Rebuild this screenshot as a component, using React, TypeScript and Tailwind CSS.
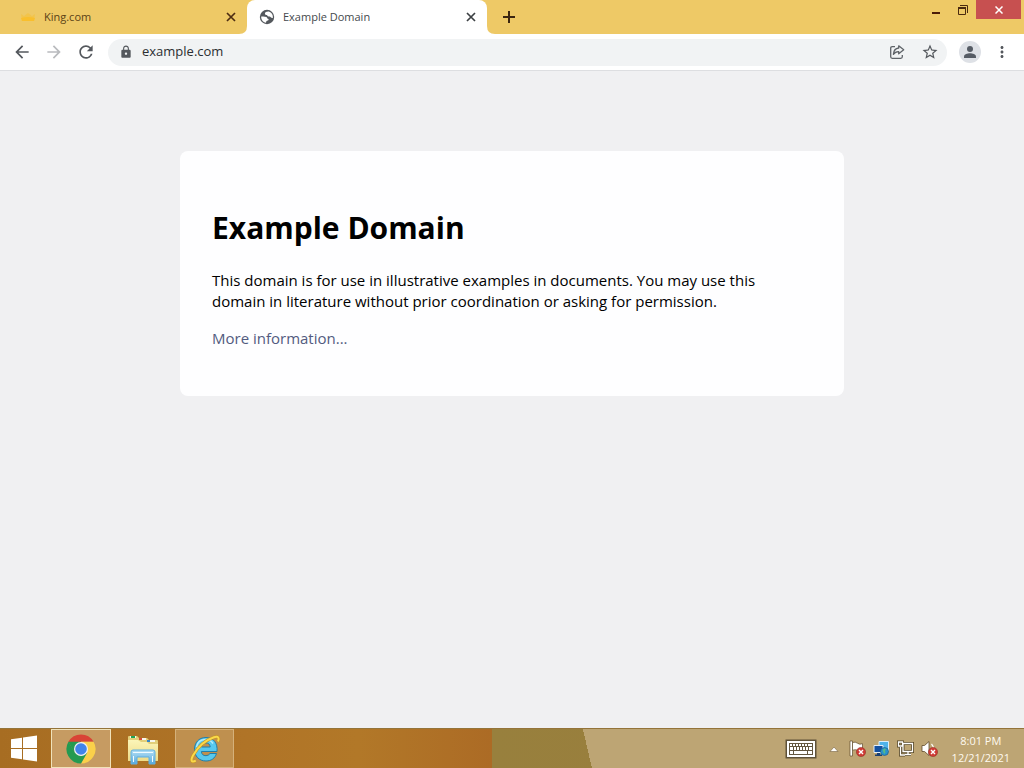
import type { ReactNode } from "react";
import {
  MdArrowBack,
  MdArrowForward,
  MdLock,
  MdMoreVert,
  MdRefresh,
  MdStarBorder,
} from "react-icons/md";

function GlobeIcon() {
  return (
    <svg viewBox="0 0 16 16" className="size-4 shrink-0" aria-hidden="true">
      <circle cx="8" cy="8" r="7.2" fill="#54585d" />
      <path
        d="M9.800 2.400C7.400 2.300 6 3.100 5.900 4.600c0 1.300 1 1.500 2.100 1.500.4 1.300 1.200 1.500 2.600 1.500 1 0 1.200 1.300 2.300 1.300h.9C14.300 6 12.700 3.200 9.800 2.400z"
        fill="#fff"
      />
      <path
        d="M2.200 7.600c1.800-.2 3.800-.2 5.200.5.9.5.7 1.400 1.400 1.700 1 .3 1.100 1 .5 1.500-.7.500-1.900.3-2 1.300l-.3 1.200C4.100 13.300 2 10.900 2.200 7.600z"
        fill="#fff"
      />
    </svg>
  );
}

function CrownIcon() {
  return (
    <svg viewBox="0 0 16 16" className="size-4 shrink-0" aria-hidden="true">
      <path d="M1 5l3 2 4-3 4 3 3-2-1 7H2z" fill="#f2c44c" />
      <path d="M1 9q7-2 14 0l-1 3H2z" fill="#f9bf2d" />
    </svg>
  );
}

function CrossIcon() {
  return (
    <svg viewBox="0 0 10 10" className="size-[10px]" fill="none" stroke="currentColor" strokeWidth="1.700" aria-hidden="true">
      <path d="M1 1l8 8M9 1L1 9" />
    </svg>
  );
}

function PlusIcon() {
  return (
    <svg viewBox="0 0 12 12" className="size-3" fill="none" stroke="currentColor" strokeWidth="2" aria-hidden="true">
      <path d="M6 0v12M0 6h12" />
    </svg>
  );
}

function PersonIcon() {
  return (
    <svg viewBox="0 0 14 14" className="size-[14px]" fill="#565c65" aria-hidden="true">
      <circle cx="7" cy="4" r="3" />
      <path d="M1 13v-1.500C1 9.300 4.500 8.200 7 8.200s6 1.100 6 3.300V13z" />
    </svg>
  );
}

function ShareIcon() {
  return (
    <svg viewBox="0 0 16 16" className="size-4" fill="none" stroke="#5f6368" strokeWidth="1.300" strokeLinejoin="round" aria-hidden="true">
      <path d="M6 2.700H3.200q-1.500 0-1.500 1.500v8.600q0 1.500 1.500 1.500h8.600q1.500 0 1.500-1.500V11" />
      <path d="M9.700 1.800l5 4-5 4V7.600C7.500 7.500 5.800 8.300 4.400 10.400c.2-3.500 2-6 5.300-6.400z" />
    </svg>
  );
}

function Flare({ side }: { side: "left" | "right" }) {
  return (
    <svg viewBox="0 0 8 8" className="size-2 shrink-0 self-end" aria-hidden="true">
      <path d={side === "left" ? "M8 0v8H0Q8 8 8 0z" : "M0 0v8h8Q0 8 0 0z"} fill="#fff" />
    </svg>
  );
}

function Tab({ icon, title, active = false }: { icon: ReactNode; title: string; active?: boolean }) {
  return (
    <div
      className={
        active
          ? "flex w-60 items-center rounded-t-lg bg-white pl-3 pr-2 text-[#45494d]"
          : "flex w-[239px] items-center pl-5 text-[#5b4216]"
      }
    >
      {icon}
      <button type="button" className="ml-2 flex-1 text-left text-[11px]">
        {title}
      </button>
      <button
        type="button"
        aria-label={`Close ${title}`}
        className={
          active
            ? "flex size-4 items-center justify-center text-[#3c4043]"
            : "flex size-4 items-center justify-center text-[#4d2d13]"
        }
      >
        <CrossIcon />
      </button>
    </div>
  );
}

function TabStrip() {
  return (
    <header className="flex h-[34px] bg-[#eec966]">
      <Tab icon={<CrownIcon />} title="King.com" />
      <Flare side="left" />
      <Tab icon={<GlobeIcon />} title="Example Domain" active />
      <Flare side="right" />
      <button type="button" aria-label="New tab" className="ml-1 flex w-5 items-center justify-center text-[#3b2510]">
        <PlusIcon />
      </button>
      <div className="ml-auto flex h-[19px] pr-[3px]">
        <button type="button" aria-label="Minimize" className="flex w-7 items-center justify-center">
          <svg viewBox="0 0 10 14" className="h-[14px] w-[10px]" aria-hidden="true">
            <path d="M1 9h8v2H1z" fill="#4a1c08" />
          </svg>
        </button>
        <button type="button" aria-label="Restore" className="flex w-[26px] items-center justify-center">
          <svg viewBox="0 0 10 10" className="size-[10px]" fill="none" stroke="#4a2a10" aria-hidden="true">
            <path d="M2 .5h7.500V8" />
            <path d="M.5 3h7v6.500h-7z" />
            <path d="M0 3h8" strokeWidth="2" />
          </svg>
        </button>
        <button type="button" aria-label="Close" className="flex w-[45px] items-center justify-center bg-[#c75050]">
          <svg viewBox="0 0 8 8" className="size-2" stroke="#fff" strokeWidth="1.500" aria-hidden="true">
            <path d="M.5.5l7 7M7.500.5l-7 7" />
          </svg>
        </button>
      </div>
    </header>
  );
}

function Toolbar() {
  return (
    <nav className="flex h-[37px] items-center border-b border-[#dddee1] bg-white pr-[13px] pl-3 text-[#54585d]">
      <button type="button" aria-label="Back" className="mr-3">
        <MdArrowBack className="size-5" />
      </button>
      <button type="button" aria-label="Forward" className="mr-3 text-[#b9bbbe]">
        <MdArrowForward className="size-5" />
      </button>
      <button type="button" aria-label="Reload" className="mr-3">
        <MdRefresh className="size-5" />
      </button>
      <div className="flex h-[27px] flex-1 items-center rounded-full bg-[#f1f3f4] pr-2 pl-[11px]">
        <MdLock className="size-[14px]" />
        <input
          aria-label="Address"
          defaultValue="example.com"
          className="ml-[9px] min-w-0 flex-1 bg-transparent text-[13px] text-[#2b2e31] outline-none"
        />
        <button type="button" aria-label="Share" className="mr-4">
          <ShareIcon />
        </button>
        <button type="button" aria-label="Bookmark">
          <MdStarBorder className="size-[18px]" />
        </button>
      </div>
      <button
        type="button"
        aria-label="Profile"
        className="ml-3 flex size-[22px] items-center justify-center rounded-full bg-[#dee1e6]"
      >
        <PersonIcon />
      </button>
      <button type="button" aria-label="Menu" className="ml-3">
        <MdMoreVert className="size-[18px]" />
      </button>
    </nav>
  );
}

function WindowsLogo() {
  return (
    <svg viewBox="0 0 28 28" className="size-7" fill="#fff" aria-hidden="true">
      <path d="M1 4.200l11-1.500v10.300H1zM13 2.600L27 .5V13H13zM1 14h11v10.300L1 22.800zM13 14h14v12.500l-14-2.100z" />
    </svg>
  );
}

function ChromeLogo() {
  return (
    <svg viewBox="0 0 30 30" className="size-[30px]" aria-hidden="true">
      <path d="M15 15L2.440 7.750A14.500 14.500 0 0 1 27.560 7.750H15z" fill="#d94436" />
      <path d="M15 7.750h12.560A14.500 14.500 0 0 1 15 29.500L21.280 18.620z" fill="#fbd04a" />
      <path d="M2.440 7.750L8.720 18.620 15 22.250l6.280-3.630L15 29.500A14.500 14.500 0 0 1 2.440 7.750z" fill="#249a51" />
      <path d="M2.440 7.750L8.720 18.620 15 15V7.750z" fill="#249a51" />
      <path d="M2.440 7.750L8.720 18.620 15 22.250V15z" fill="#249a51" />
      <circle cx="15" cy="15" r="7" fill="#f1f1f1" />
      <circle cx="15" cy="15" r="5.800" fill="#4184ea" />
    </svg>
  );
}

function ExplorerLogo() {
  return (
    <svg viewBox="0 0 34 32" className="h-8 w-[34px]" aria-hidden="true">
      <defs>
        <linearGradient id="folder" x1="0" y1="0" x2="0" y2="1">
          <stop offset="0" stopColor="#fbf5b8" />
          <stop offset="1" stopColor="#eedb88" />
        </linearGradient>
        <linearGradient id="stand" x1="0" y1="0" x2="0" y2="1">
          <stop offset="0" stopColor="#b4e0f5" />
          <stop offset="1" stopColor="#58a9dc" />
        </linearGradient>
      </defs>
      <path d="M2 4q0-1 1-1h8l2 2h8l2 2h8q1 0 1 1v20H2z" fill="#e2cf79" />
      <path d="M4 3h6v2H4zM13 5h7v2h-7zM21 7h8v2h-8z" fill="#f7f7ed" />
      <path d="M5 3h4v2H5z" fill="#20a454" />
      <path d="M13 5h3v2h-3z" fill="#d84d38" />
      <path d="M21 7h3v2h-3z" fill="#3786c4" />
      <path d="M2 7h10l3 2h6l2 2h9v16q0 1-1 1H3q-1 0-1-1z" fill="url(#folder)" />
      <path d="M5 19q0-2 2-2h20q2 0 2 2v12h-6v-7H11v7H5z" fill="url(#stand)" stroke="#5fafe0" />
      <path d="M7 19h20v1H7zM7 23h1v6H7zM26 23h1v6h-1z" fill="#f0fbff" />
    </svg>
  );
}

function IeLogo() {
  return (
    <svg viewBox="0 0 34 32" className="h-8 w-[34px]" fill="none" aria-hidden="true">
      <path
        d="M28.500 20.500H22q-1.500 2.200-4 2.200-4.300 0-4.600-4.200H29C29.800 10 25.500 4.500 18 4.500 10.500 4.500 6.500 10 6.500 16.500S11 28 18 28c5.300 0 9-2.700 10.500-7.500zM13.500 14c.5-2.700 2-4 4.500-4s4 1.300 4.200 4z"
        fill="#58c9ee"
        stroke="#217eaa"
        strokeWidth="1"
      />
      <path d="M8.500 14c.8-4.500 4-7.500 9-7.500 3 0 6 1.500 7.500 4" stroke="#b2ecfa" strokeWidth="1.500" />
      <path d="M30 8.500c1.500-3.500.5-5.700-4-4.300C17.500 7 9.500 14.500 5 22.500c-2.600 5-1.800 7.500 2.800 5.200" stroke="#c9961e" strokeWidth="3" />
      <path d="M30 8.500c1.500-3.500.5-5.700-4-4.300C17.500 7 9.500 14.500 5 22.500c-2.600 5-1.800 7.500 2.800 5.200" stroke="#f9d94b" strokeWidth="2" />
    </svg>
  );
}

function KeyboardIcon() {
  return (
    <svg viewBox="0 0 32 20" className="h-5 w-8" aria-hidden="true">
      <path d="M.5.5h31v19H.5z" fill="#5e5138" />
      <path d="M2 2h28v16H2z" fill="#fff" />
      <path d="M4 4h24v12H4z" fill="#62563f" />
      <path
        d="M5 5h2v2H5zM8 5h2v2H8zM11 5h2v2h-2zM14 5h2v2h-2zM17 5h2v2h-2zM20 5h2v2h-2zM23 5h4v2h-4zM5 8h3v3H5zM9 8h2v3H9zM12 8h2v3h-2zM15 8h2v3h-2zM18 8h2v3h-2zM21 8h2v3h-2zM24 8h3v3h-3zM5 12h3v3H5zM9 12h13v3H9zM23 12h4v3h-4z"
        fill="#fff"
      />
    </svg>
  );
}

function ErrorBadge() {
  return (
    <g>
      <circle cx="12" cy="12" r="4.600" fill="#cf3b35" stroke="#8d2a22" strokeWidth=".5" />
      <path d="M10 10l4 4M14 10l-4 4" stroke="#fff" strokeWidth="1.400" />
    </g>
  );
}

function FlagIcon() {
  return (
    <svg viewBox="0 0 17 17" className="size-[17px]" aria-hidden="true">
      <path d="M1 1h2.500v15H1z" fill="#fff" stroke="#5e4a2b" strokeWidth=".7" />
      <path d="M3.500 2.500q3-1 5 .7t5 .5v7q-3 .5-5-.5t-5 0z" fill="#fff" stroke="#5e4a2b" strokeWidth=".7" />
      <ErrorBadge />
    </svg>
  );
}

function RemoteIcon() {
  return (
    <svg viewBox="0 0 17 17" className="size-[17px]" aria-hidden="true">
      <path d="M6 1.500h9.500v9H6z" fill="#4fb3ea" stroke="#dbeefb" />
      <path d="M1 5.500h9v7H1z" fill="#1450a0" stroke="#e3edf6" />
      <path d="M4 13h3v1.500h2V16H2v-1.500h2z" fill="#1c3f70" />
      <circle cx="11.500" cy="11.500" r="4" fill="#2a92cd" stroke="#17527d" strokeWidth=".6" />
      <path d="M9.500 10q2-2.500 3.500-1l-1 2 .5 1.500-1.500 1.500-.8-2.500z" fill="#59b987" />
    </svg>
  );
}

function NetworkIcon() {
  return (
    <svg viewBox="0 0 17 17" className="size-[17px]" fill="none" aria-hidden="true">
      <path d="M6 3.500h9.500v8H6zM8 14.500h6M11 12v3M3.500 7v8H8M1.500 2h4v4h-4z" stroke="#574725" strokeWidth="3" />
      <path d="M6 3.500h9.500v8H6zM8 14.500h6M11 12v3M3.500 7v8H8M1.500 2h4v4h-4z" stroke="#fff" strokeWidth="1.300" />
    </svg>
  );
}

function VolumeIcon() {
  return (
    <svg viewBox="0 0 17 17" className="size-[17px]" aria-hidden="true">
      <path d="M1 5.500h2.500L8 1.500v14l-4.500-4H1z" fill="#fff" stroke="#5e4a2b" strokeWidth=".8" />
      <path d="M10.500 4q2 2 2 5" fill="none" stroke="#fff" strokeWidth="1.200" />
      <ErrorBadge />
    </svg>
  );
}

function Taskbar() {
  return (
    <footer className="flex h-10 items-center border-t border-[#94743a] bg-[linear-gradient(77deg,transparent_57.3%,#bda574_57.3%),linear-gradient(90deg,#a76d22_0%,#b07427_24%,#b27828_35%,#ac6b25_48%,#98803d_48%,#9c7b3c_100%)]">
      <button type="button" aria-label="Start" className="ml-[10px] mr-[13px]">
        <WindowsLogo />
      </button>
      <button
        type="button"
        aria-label="Google Chrome"
        className="flex h-[39px] w-[60px] items-center justify-center border border-[#f0e2ba] bg-[#c69b62]"
      >
        <ChromeLogo />
      </button>
      <button type="button" aria-label="File Explorer" className="flex h-[39px] w-16 items-center justify-center">
        <ExplorerLogo />
      </button>
      <button
        type="button"
        aria-label="Internet Explorer"
        className="flex h-[39px] w-[59px] items-center justify-center border border-[#d5b17a] bg-[#bf904f]"
      >
        <IeLogo />
      </button>
      <div className="ml-auto flex items-center pr-[14px] text-[#fffaf0]">
        <button type="button" aria-label="Touch keyboard" className="mr-3">
          <KeyboardIcon />
        </button>
        <button type="button" aria-label="Show hidden icons" className="mr-[10px]">
          <svg viewBox="0 0 10 6" className="h-[6px] w-[10px]" aria-hidden="true">
            <path d="M1 5.500l4-4.500 4 4.500z" fill="#fff" stroke="#776342" strokeWidth=".6" />
          </svg>
        </button>
        <div className="flex gap-[7px]">
          <FlagIcon />
          <RemoteIcon />
          <NetworkIcon />
          <VolumeIcon />
        </div>
        <div className="ml-[14px] text-center text-[11px] leading-[17px]">
          <div>8:01 PM</div>
          <div>12/21/2021</div>
        </div>
      </div>
    </footer>
  );
}

export default function App() {
  return (
    <div className="flex min-h-screen flex-col bg-[#f0f0f2] font-['Open_Sans','Noto_Sans',sans-serif]">
      <TabStrip />
      <Toolbar />
      <main className="flex-1 px-4 pt-20">
        <article className="mx-auto max-w-[664px] rounded-lg bg-[#fefeff] px-8 pt-[55px] pb-[47px] text-black">
          <h1 className="text-[30px] leading-[44px] font-bold">Example Domain</h1>
          <p className="mt-5 text-[15px] leading-[21px]">
            This domain is for use in illustrative examples in documents. You may use this domain in literature without
            prior coordination or asking for permission.
          </p>
          <p className="mt-4 text-[15px] leading-[21px]">
            <a href="https://www.iana.org/domains/example" className="text-[#525b80]">
              More information...
            </a>
          </p>
        </article>
      </main>
      <Taskbar />
    </div>
  );
}
